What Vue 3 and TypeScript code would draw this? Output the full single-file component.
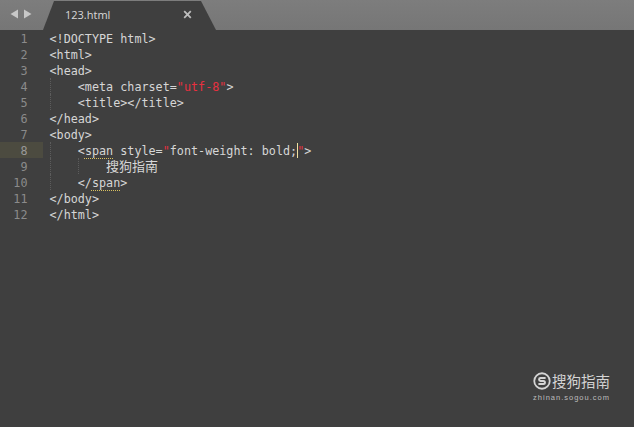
<script setup lang="ts">
interface Seg { t: string; c?: string }
const lines: Seg[][] = [
  [{ t: '<!DOCTYPE html>' }],
  [{ t: '<html>' }],
  [{ t: '<head>' }],
  [{ t: '    <meta charset=' }, { t: '"', c: 'str' }, { t: 'utf-8', c: 'str' }, { t: '"', c: 'str' }, { t: '>' }],
  [{ t: '    <title></title>' }],
  [{ t: '</head>' }],
  [{ t: '<body>' }],
  [{ t: '    <' }, { t: 'span', c: 'match' }, { t: ' style=' }, { t: '"', c: 'str' }, { t: 'font-weight: bold;' }, { t: '', c: 'caret' }, { t: '"', c: 'str' }, { t: '>' }],
  [{ t: '        ' }, { t: '搜狗指南', c: 'cjk' }],
  [{ t: '    </' }, { t: 'span', c: 'match' }, { t: '>' }],
  [{ t: '</body>' }],
  [{ t: '</html>' }],
]
const guides: Record<number, number[]> = { 3: [0], 4: [0], 7: [0], 8: [0, 4], 9: [0] }
</script>

<template>
  <div class="window">
    <header class="tabbar">
      <div class="nav">
        <svg width="9" height="10" viewBox="0 0 9 10"><path d="M8 0.5V9.5L0.5 5Z" fill="#c8c8c8" /></svg>
        <svg width="9" height="10" viewBox="0 0 9 10"><path d="M1 0.5V9.5L8.5 5Z" fill="#c8c8c8" /></svg>
      </div>
      <div class="tab">
        <span class="tab-name">123.html</span>
        <svg class="close" width="9" height="9" viewBox="0 0 9 9"><path d="M1.2 1.2L7.8 7.8M7.8 1.2L1.2 7.8" stroke="#bdbdbd" stroke-width="1.8" /></svg>
      </div>
    </header>
    <main class="editor">
      <div class="gutter">
        <div v-for="(_, i) in lines" :key="i" class="num" :class="{ active: i === 7 }">{{ i + 1 }}</div>
      </div>
      <div class="code">
        <div v-for="(line, i) in lines" :key="i" class="line">
          <i v-for="g in guides[i] || []" :key="g" class="guide" :class="'g' + g"></i>
          <span v-for="(s, j) in line" :key="j" :class="s.c">{{ s.t }}</span>
        </div>
      </div>
    </main>
    <div class="mark">
      <div class="mark-top">
        <svg width="18" height="18" viewBox="0 0 20 20">
          <circle cx="10" cy="10" r="8.6" fill="none" stroke="#d4d4d4" stroke-width="2" />
          <path d="M14 6.6H8.4C6.2 6.6 6.2 9.9 8.4 9.9H11.6C13.8 9.9 13.8 13.3 11.6 13.3H6" fill="none" stroke="#d4d4d4" stroke-width="2.2" />
        </svg>
        <span>搜狗指南</span>
      </div>
      <div class="mark-url">zhinan.sogou.com</div>
    </div>
  </div>
</template>

<style>
html, body { margin: 0; background: #3e3e3e; }
</style>

<style scoped>
.window {
  position: relative;
  width: 634px;
  height: 427px;
  overflow: hidden;
  background: #3f3f3f;
  font-family: "DejaVu Sans Mono", monospace;
}
.tabbar {
  display: flex;
  height: 30px;
  background: linear-gradient(#7d7d7d, #767676);
}
.nav {
  display: flex;
  align-items: center;
  gap: 4px;
  width: 43px;
  padding: 0 0 3px 10px;
  box-sizing: border-box;
}
.tab {
  display: flex;
  align-items: center;
  justify-content: space-between;
  box-sizing: border-box;
  width: 173px;
  height: 29px;
  margin-top: 1px;
  padding: 0 24px 2px 22px;
  background: #3f3f3f;
  clip-path: polygon(0 100%, 11px 0, 158px 0, 100% 100%);
}
.tab-name {
  color: #d8d8d8;
  font: 11px "Open Sans", "Liberation Sans", sans-serif;
}
.editor {
  display: flex;
}
.gutter {
  width: 49.5px;
  flex: none;
}
.num {
  box-sizing: border-box;
  width: 43px;
  height: 16px;
  padding: 1px 15.5px 0 0;
  color: #8b8b8b;
  font-size: 11.75px;
  line-height: 16px;
  text-align: right;
}
.num.active {
  background: #4c4b40;
  color: #999;
}
.code {
  flex: 1;
  color: #d6d6d6;
  font-size: 11.75px;
  line-height: 16px;
}
.line {
  position: relative;
  box-sizing: border-box;
  height: 16px;
  padding-top: 1px;
  white-space: pre;
}
.guide {
  position: absolute;
  top: 0;
  bottom: 0;
  width: 0;
  border-left: 1px dotted #5c5c5c;
}
.g0 { left: 0; }
.g4 { left: 28px; }
.str { color: #e8303f; }
.match {
  text-decoration: underline dotted #d8c060 1px;
  text-underline-offset: 3px;
}
.caret {
  display: inline-block;
  width: 1px;
  height: 15px;
  margin-right: -1px;
  vertical-align: -3px;
  background: #f0e0a0;
}
.cjk {
  display: inline-block;
  height: 16px;
  color: #d6d6d6;
  font: 13px/14px "Noto Sans CJK SC", sans-serif;
  vertical-align: top;
}
.mark {
  position: absolute;
  right: 24px;
  top: 371px;
  color: #d4d4d4;
  text-align: center;
}
.mark-top {
  display: flex;
  align-items: center;
  gap: 1px;
  font: 14.5px/20px "Noto Sans CJK SC", sans-serif;
}
.mark-url {
  margin-top: 2px;
  font: 7.5px/10px "Liberation Sans", sans-serif;
  letter-spacing: 1px;
  color: #bcbcbc;
  white-space: nowrap;
}
</style>
